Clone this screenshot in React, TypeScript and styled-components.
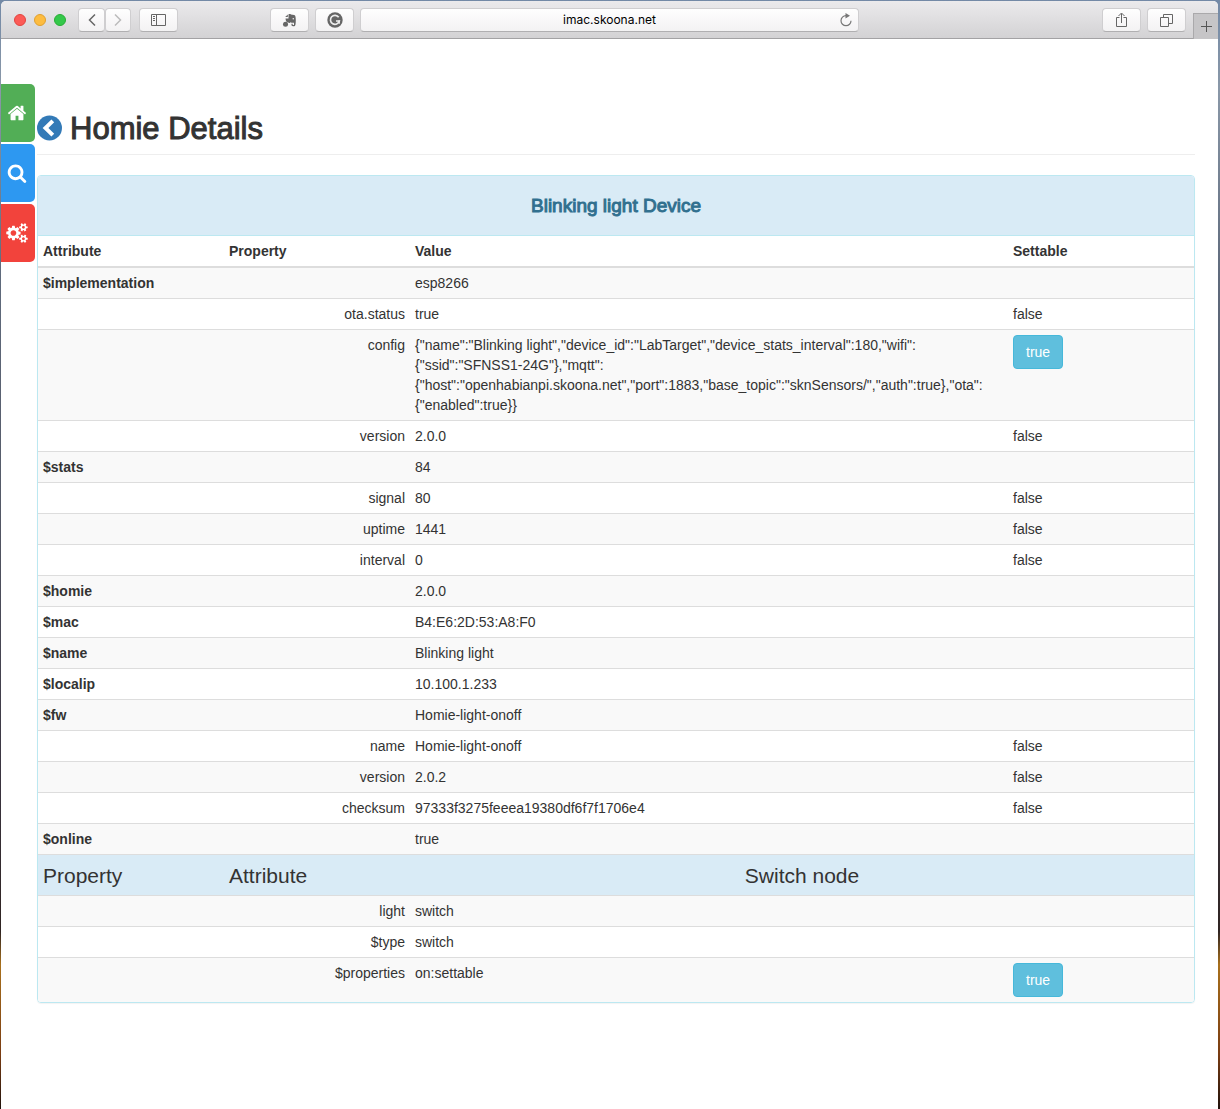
import React from 'react';
import styled, { createGlobalStyle } from 'styled-components';

const GlobalStyle = createGlobalStyle`
  * { box-sizing: border-box; }
  body {
    margin: 0;
    font-family: "Liberation Sans", Arial, sans-serif;
    font-size: 14px;
    line-height: 20px;
    color: #333;
  }
`;

const Desktop = styled.div`
  min-height: 100vh;
  display: flex;
  flex-direction: column;
  padding: 1px 2px 0 1px;
  background: linear-gradient(#7389a6 0, #8a98a8 8%, #5f6a7c 25%, #555a68 45%, #3a3440 70%, #2f2422 84%, #a8701c 87%, #7a3c12 95%, #20120c 100%);
`;

const BrowserWindow = styled.div`
  flex: 1;
  display: flex;
  flex-direction: column;
  background: #fff;
  border-radius: 5px 5px 0 0;
  overflow: hidden;
`;

const Toolbar = styled.header`
  display: grid;
  grid-template-columns: 1fr 499px 1fr;
  align-items: start;
  height: 38px;
  background: linear-gradient(#ebeaec, #d3d2d4);
  border-bottom: 1px solid #a3a2a4;
`;

const ToolGroup = styled.div<{ $end?: boolean }>`
  display: flex;
  align-items: center;
  justify-content: ${p => (p.$end ? 'flex-end' : 'flex-start')};
  height: 38px;
`;

const Lights = styled.div`
  display: flex;
  gap: 8px;
  margin: 0 12px 0 13px;
`;

const Light = styled.button<{ $fill: string; $edge: string }>`
  width: 12px;
  height: 12px;
  padding: 0;
  border: 1px solid ${p => p.$edge};
  border-radius: 50%;
  background: ${p => p.$fill};
`;

const ToolButton = styled.button<{ $width?: number }>`
  display: flex;
  align-items: center;
  justify-content: center;
  width: ${p => p.$width ?? 39}px;
  height: 24px;
  padding: 0;
  border: 1px solid #cfced0;
  border-bottom-color: #b0afb1;
  border-radius: 4px;
  background: linear-gradient(#fefefe, #f3f2f3);
  color: #666;
`;

const History = styled.div`
  display: flex;
  margin-right: 8px;
`;

const Extensions = styled.div`
  display: flex;
  gap: 6px;
  margin: 0 6px 0 auto;
`;

const AddressBar = styled.div`
  display: grid;
  grid-template-columns: 24px 1fr 24px;
  align-items: center;
  height: 24px;
  margin-top: 7px;
  border: 1px solid #cfced0;
  border-bottom-color: #b0afb1;
  border-radius: 4px;
  background: linear-gradient(#fefefe, #f3f2f3);
`;

const Address = styled.input`
  grid-column: 2;
  min-width: 0;
  padding: 0;
  border: 0;
  outline: 0;
  background: transparent;
  color: #000;
  font: 12px/16px Inter, "Liberation Sans", sans-serif;
  text-align: center;
`;

const Reload = styled.button`
  display: flex;
  padding: 0 5px;
  border: 0;
  background: none;
  color: #777;
`;

const NewTab = styled.button`
  display: flex;
  align-items: center;
  justify-content: center;
  align-self: flex-end;
  width: 25px;
  height: 26px;
  margin-left: 7px;
  padding: 0;
  border: solid #aaa9ab;
  border-width: 1px 0 0 1px;
  background: #c6c5c7;
  color: #555;
`;

const WindowTools = styled.div`
  display: flex;
  gap: 6px;
`;

const Viewport = styled.div`
  display: flex;
  align-items: flex-start;
  padding: 45px 23px 0 0;
`;

const SideNav = styled.nav`
  display: flex;
  flex: none;
  flex-direction: column;
  gap: 2px;
  width: 36px;
`;

const SideLink = styled.a<{ $color: string }>`
  display: flex;
  align-items: center;
  justify-content: center;
  width: 34px;
  height: 58px;
  padding-right: 2px;
  border-radius: 0 5px 5px 0;
  background: ${p => p.$color};
  color: #fff;
`;

const Content = styled.main`
  flex: 1;
  min-width: 0;
  padding-top: 24px;
`;

const PageHeader = styled.header`
  display: flex;
  align-items: center;
  gap: 7px;
  height: 47px;
  padding-bottom: 6px;
  border-bottom: 1px solid #eee;
`;

const BackLink = styled.a`
  display: flex;
  color: #337ab7;
`;

const Title = styled.h1`
  margin: 0;
  font-size: 31px;
  font-weight: 400;
  line-height: 33px;
  -webkit-text-stroke: 1px #333;
`;

const Panel = styled.section`
  margin: 20px 0;
  border: 1px solid #bce8f1;
  border-radius: 4px;
  overflow: hidden;
  box-shadow: 0 1px 1px rgba(0, 0, 0, 0.05);
`;

const PanelHeading = styled.h2`
  margin: 0;
  padding: 20px 15px 19px;
  border-bottom: 1px solid #bce8f1;
  background: #d9ebf6;
  color: #31708f;
  font-size: 19px;
  font-weight: 400;
  line-height: 20px;
  text-align: center;
  -webkit-text-stroke: 1px #31708f;
`;

const Table = styled.table`
  width: 100%;
  table-layout: fixed;
  border-collapse: separate;
  border-spacing: 0;
`;

const Column = styled.col<{ $width?: number }>`
  width: ${p => (p.$width ? `${p.$width}px` : 'auto')};
`;

const HeadCell = styled.th`
  padding: 5px;
  border-bottom: 1px solid #ddd;
  text-align: left;
`;

const Row = styled.tr<{ $striped: boolean }>`
  background: ${p => (p.$striped ? '#f9f9f9' : '#fff')};
`;

const Cell = styled.td<{ $right?: boolean; $bold?: boolean }>`
  padding: 5px;
  border-top: 1px solid #ddd;
  vertical-align: top;
  white-space: pre-line;
  font-weight: ${p => (p.$bold ? 700 : 400)};
  text-align: ${p => (p.$right ? 'right' : 'left')};
`;

const NodeCell = styled.th<{ $center?: boolean }>`
  padding: 6px 5px 4px;
  border-top: 1px solid #ddd;
  background: #d9ebf6;
  font-size: 21px;
  font-weight: 300;
  line-height: 30px;
  text-align: ${p => (p.$center ? 'center' : 'left')};
`;

const SetButton = styled.button`
  display: block;
  height: 34px;
  padding: 6px 12px;
  border: 1px solid #46b8da;
  border-radius: 4px;
  background: #5fbfdd;
  color: #fff;
  font: 14px/20px "Liberation Sans", Arial, sans-serif;
`;

type Entry = { attribute?: string; property?: string; value: string; settable?: 'false' | 'true' };

const deviceRows: Entry[] = [
  { attribute: '$implementation', value: 'esp8266' },
  { property: 'ota.status', value: 'true', settable: 'false' },
  {
    property: 'config',
    value:
      '{"name":"Blinking light","device_id":"LabTarget","device_stats_interval":180,"wifi":\n{"ssid":"SFNSS1-24G"},"mqtt":\n{"host":"openhabianpi.skoona.net","port":1883,"base_topic":"sknSensors/","auth":true},"ota":\n{"enabled":true}}',
    settable: 'true',
  },
  { property: 'version', value: '2.0.0', settable: 'false' },
  { attribute: '$stats', value: '84' },
  { property: 'signal', value: '80', settable: 'false' },
  { property: 'uptime', value: '1441', settable: 'false' },
  { property: 'interval', value: '0', settable: 'false' },
  { attribute: '$homie', value: '2.0.0' },
  { attribute: '$mac', value: 'B4:E6:2D:53:A8:F0' },
  { attribute: '$name', value: 'Blinking light' },
  { attribute: '$localip', value: '10.100.1.233' },
  { attribute: '$fw', value: 'Homie-light-onoff' },
  { property: 'name', value: 'Homie-light-onoff', settable: 'false' },
  { property: 'version', value: '2.0.2', settable: 'false' },
  { property: 'checksum', value: '97333f3275feeea19380df6f7f1706e4', settable: 'false' },
  { attribute: '$online', value: 'true' },
];

const nodeRows: Entry[] = [
  { property: 'light', value: 'switch' },
  { property: '$type', value: 'switch' },
  { property: '$properties', value: 'on:settable', settable: 'true' },
];

const EntryRow = ({ entry, striped }: { entry: Entry; striped: boolean }) => (
  <Row $striped={striped}>
    <Cell $bold>{entry.attribute}</Cell>
    <Cell $right>{entry.property}</Cell>
    <Cell>{entry.value}</Cell>
    <Cell>{entry.settable === 'true' ? <SetButton type="button">true</SetButton> : entry.settable}</Cell>
  </Row>
);

const HomeIcon = () => (
  <svg width="20" height="20" viewBox="0 0 1792 1792" fill="currentColor">
    <path d="M1472 992v480q0 26-19 45t-45 19h-384v-384h-256v384h-384q-26 0-45-19t-19-45v-480q0-1 .5-3t.5-3l575-474 575 474q1 2 1 6zm223-69l-62 74q-8 9-21 11h-3q-13 0-21-7l-692-577-692 577q-12 8-24 7-13-2-21-11l-62-74q-8-10-7-23.5t11-21.5l719-599q32-26 76-26t76 26l244 204v-195q0-14 9-23t23-9h192q14 0 23 9t9 23v408l219 182q10 8 11 21.5t-7 23.5z" />
  </svg>
);

const SearchIcon = () => (
  <svg width="20" height="20" viewBox="0 0 1792 1792" fill="currentColor">
    <path d="M1216 832q0-185-131.5-316.5t-316.5-131.5-316.5 131.5-131.5 316.5 131.5 316.5 316.5 131.5 316.5-131.5 131.5-316.5zm512 832q0 52-38 90t-90 38q-54 0-90-38l-343-342q-179 124-399 124-143 0-273.5-55.5t-225-150-150-225-55.5-273.5 55.5-273.5 150-225 225-150 273.5-55.5 273.5 55.5 225 150 150 225 55.5 273.5q0 220-124 399l343 343q37 37 37 90z" />
  </svg>
);

const smallCog =
  'v140q0 16-149 31-12 27-30 52 51 113 51 138 0 4-4 7-122 71-124 71-8 0-46-47t-52-68q-20 2-30 2t-30-2q-14 21-52 68t-46 47q-2 0-124-71-4-3-4-7 0-25 51-138-18-25-30-52-149-15-149-31v-140q0-16 149-31 13-29 30-52-51-113-51-138 0-4 4-7 4-2 35-20t59-34 30-16q8 0 46 46.5t52 67.5q20-2 30-2t30 2q51-71 92-112l6-2q4 0 124 70 4 3 4 7 0 25-51 138 17 23 30 52 149 15 149 31z';

const CogsIcon = () => (
  <svg width="22" height="20" viewBox="0 0 1920 1792" fill="currentColor">
    <path
      d={`M896 896q0-106-75-181t-181-75-181 75-75 181 75 181 181 75 181-75 75-181zm768 512q0-52-38-90t-90-38-90 38-38 90q0 53 37.5 90.5t90.5 37.5 90.5-37.5 37.5-90.5zm0-1024q0-52-38-90t-90-38-90 38-38 90q0 53 37.5 90.5t90.5 37.5 90.5-37.5 37.5-90.5zm-384 421v185q0 10-7 19.5t-16 10.5l-155 24q-11 35-32 76 34 48 90 115 7 11 7 20 0 12-7 19-23 30-82.5 89.5t-78.5 59.5q-11 0-21-7l-115-90q-37 19-77 31-11 108-23 155-7 24-30 24h-186q-11 0-20-7.5t-10-17.5l-23-153q-34-10-75-31l-118 89q-7 7-20 7-11 0-21-8-144-133-144-160 0-9 7-19 10-14 41-53t47-61q-23-44-35-82l-152-24q-10-1-17-9.5t-7-19.5v-185q0-10 7-19.5t16-10.5l155-24q11-35 32-76-34-48-90-115-7-11-7-20 0-12 7-20 22-30 82-89t79-59q11 0 21 7l115 90q34-18 77-32 11-108 23-154 7-24 30-24h186q11 0 20 7.5t10 17.5l23 153q34 10 75 31l118-89q8-7 20-7 11 0 21 8 144 133 144 160 0 8-7 19-12 16-42 54t-45 60q23 48 34 82l152 23q10 2 17 10.5t7 19.5zm640 533${smallCog}m0-1024${smallCog}`}
    />
  </svg>
);

const BackIcon = () => (
  <svg width="26" height="26" viewBox="0 0 26 26">
    <circle cx="12.500" cy="13" r="12.5" fill="currentColor" />
    <path d="M15.800 5.800 8.500 13l7.300 7.200" fill="none" stroke="#fff" strokeWidth="4" />
  </svg>
);

const ChevronIcon = ({ next }: { next?: boolean }) => (
  <svg width="10" height="14" viewBox="0 0 10 14" fill="none" stroke={next ? '#bbb' : '#666'} strokeWidth="1.5">
    <path d={next ? 'M2 1.5 7.5 7 2 12.5' : 'M8 1.5 2.5 7 8 12.5'} />
  </svg>
);

const SidebarIcon = () => (
  <svg width="15" height="12" viewBox="0 0 15 12" fill="none" stroke="currentColor">
    <path d="M.5.5h14v11H.5zM5.500.5v11" />
    <path d="M2 2.500h2M2 4.500h2M2 6.500h2" />
  </svg>
);

const EvernoteIcon = () => (
  <svg width="16" height="16" viewBox="0 0 16 16" fill="currentColor">
    <path d="M6.500 2.200c1.500-.5 2.500-.2 3.200.5 1.500 0 3.300.2 3.600 1.200.7 2.500.6 6 .2 8.500-.2 1.300-.8 1.800-2.300 1.800-1.400 0-2-.8-1.700-2.500h1.200v1.200h1.300v-2.100H9.300l-.5-.8c-.4 1-1.500 1.100-2.700.6-1.400-.3-2.400-1.200-2.600-4.100h3z" />
    <path d="M5.800 2.400v2.700H3.200z" />
    <circle cx="3.500" cy="12.200" r="2.500" />
    <circle cx="11.300" cy="6.800" r=".8" fill="#eee" />
  </svg>
);

const GrammarlyIcon = () => (
  <svg width="16" height="16" viewBox="0 0 16 16" fill="none">
    <circle cx="8" cy="8" r="7.700" fill="currentColor" />
    <path d="M11.700 5.300A4.500 4.500 0 1 0 12.300 9H9" stroke="#eee" strokeWidth="1.700" />
    <path d="M12.200 8.300v3.500" stroke="#eee" strokeWidth="1.400" />
  </svg>
);

const ReloadIcon = () => (
  <svg width="14" height="14" viewBox="0 0 14 14" fill="none" stroke="currentColor" strokeWidth="1.200">
    <path d="M7 2.700A5 5 0 1 0 12 7.700" />
    <path d="M6.500 0 11 2.700 6.500 5.400z" fill="currentColor" stroke="none" />
  </svg>
);

const ShareIcon = () => (
  <svg width="11" height="16" viewBox="0 0 11 16" fill="none" stroke="currentColor">
    <path d="M3.500 5.500H.500v9h10v-9H7.500M5.500 11V1.500M2.500 4l3-3 3 3" />
  </svg>
);

const TabsIcon = () => (
  <svg width="13" height="13" viewBox="0 0 13 13" fill="none" stroke="currentColor">
    <path d="M.500 3.500h8v9h-8zM3.500 3V.500h9v9H9" />
  </svg>
);

const PlusIcon = () => (
  <svg width="11" height="11" viewBox="0 0 11 11" stroke="currentColor">
    <path d="M5.500 0v11M0 5.500h11" />
  </svg>
);

export default function App() {
  return (
    <>
      <GlobalStyle />
      <Desktop>
        <BrowserWindow>
          <Toolbar>
            <ToolGroup>
              <Lights>
                <Light $fill="#fc5b57" $edge="#e2443f" aria-label="Close" />
                <Light $fill="#fdbc40" $edge="#e0a02f" aria-label="Minimize" />
                <Light $fill="#34c84a" $edge="#28ad35" aria-label="Zoom" />
              </Lights>
              <History>
                <ToolButton $width={27} aria-label="Back"><ChevronIcon /></ToolButton>
                <ToolButton $width={26} aria-label="Forward"><ChevronIcon next /></ToolButton>
              </History>
              <ToolButton aria-label="Sidebar"><SidebarIcon /></ToolButton>
              <Extensions>
                <ToolButton aria-label="Evernote"><EvernoteIcon /></ToolButton>
                <ToolButton aria-label="Grammarly"><GrammarlyIcon /></ToolButton>
              </Extensions>
            </ToolGroup>
            <AddressBar>
              <Address aria-label="Address" defaultValue="imac.skoona.net" />
              <Reload aria-label="Reload"><ReloadIcon /></Reload>
            </AddressBar>
            <ToolGroup $end>
              <WindowTools>
                <ToolButton aria-label="Share"><ShareIcon /></ToolButton>
                <ToolButton aria-label="Show tabs"><TabsIcon /></ToolButton>
              </WindowTools>
              <NewTab aria-label="New tab"><PlusIcon /></NewTab>
            </ToolGroup>
          </Toolbar>
          <Viewport>
            <SideNav>
              <SideLink href="#home" $color="#52ae56" aria-label="Home"><HomeIcon /></SideLink>
              <SideLink href="#search" $color="#2d98f1" aria-label="Search"><SearchIcon /></SideLink>
              <SideLink href="#settings" $color="#f2433c" aria-label="Settings"><CogsIcon /></SideLink>
            </SideNav>
            <Content>
              <PageHeader>
                <BackLink href="#back" aria-label="Back"><BackIcon /></BackLink>
                <Title>Homie Details</Title>
              </PageHeader>
              <Panel>
                <PanelHeading>Blinking light Device</PanelHeading>
                <Table>
                  <colgroup>
                    <Column $width={186} />
                    <Column $width={186} />
                    <Column />
                    <Column $width={186} />
                  </colgroup>
                  <thead>
                    <tr>
                      <HeadCell>Attribute</HeadCell>
                      <HeadCell>Property</HeadCell>
                      <HeadCell>Value</HeadCell>
                      <HeadCell>Settable</HeadCell>
                    </tr>
                  </thead>
                  <tbody>
                    {deviceRows.map((entry, i) => (
                      <EntryRow key={i} entry={entry} striped={i % 2 === 0} />
                    ))}
                    <tr>
                      <NodeCell>Property</NodeCell>
                      <NodeCell>Attribute</NodeCell>
                      <NodeCell colSpan={2} $center>Switch node</NodeCell>
                    </tr>
                    {nodeRows.map((entry, i) => (
                      <EntryRow key={i} entry={entry} striped={i % 2 === 0} />
                    ))}
                  </tbody>
                </Table>
              </Panel>
            </Content>
          </Viewport>
        </BrowserWindow>
      </Desktop>
    </>
  );
}
